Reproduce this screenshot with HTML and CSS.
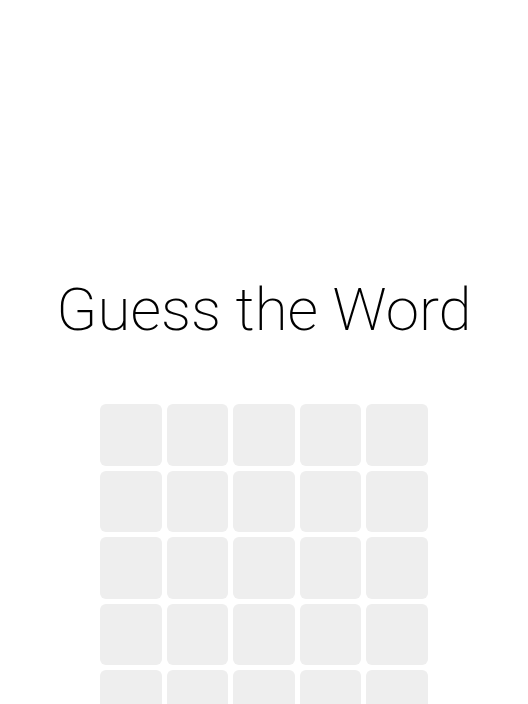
FILE: index.html
```html
<!DOCTYPE html>
<html>
<head>
    <title>Guess the Word</title>
    <link rel="stylesheet" href="styles.css">
</head>
<body>
    <div class="game">
        <h1 class="title">Guess the Word</h1>
        <div id="board" class="board"></div>
    </div>
    <script>
        const board = document.getElementById('board');
        for (let i = 0; i < 30; i++) {
            const tile = document.createElement('div');
            tile.className = 'tile';
            board.appendChild(tile);
        }
    </script>
</body>
</html>
```

FILE: styles.css
```css
* { margin: 0; padding: 0; box-sizing: border-box; }
body { font-family: Roboto, 'Liberation Sans', sans-serif; background: #fff; color: #000; overflow: hidden; height: 704px; }
.game { display: flex; flex-direction: column; align-items: center; padding-top: 270px; }
.title { font-size: 60px; font-weight: 200; line-height: 80px; margin-bottom: 54px; }
.board { display: grid; grid-template-columns: repeat(5, 1fr); gap: 5px; width: 328px; }
.tile { aspect-ratio: 1; background: #eeeeee; border-radius: 6px; }
```
